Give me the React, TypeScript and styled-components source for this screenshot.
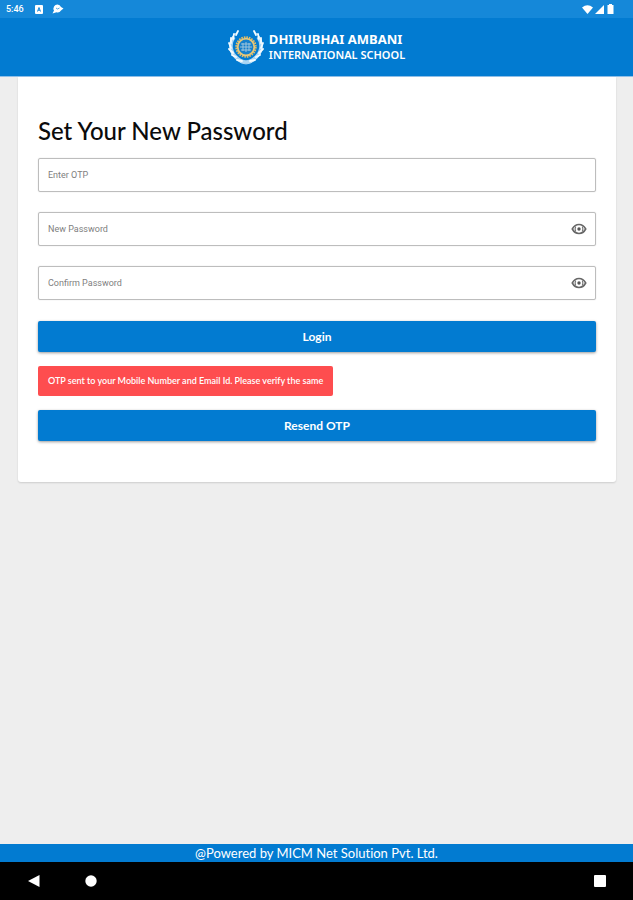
import React from "react";
import styled, { createGlobalStyle } from "styled-components";

const blue = "#027bd1";

const GlobalStyle = createGlobalStyle`
  *, *::before, *::after { box-sizing: border-box; }
  body {
    margin: 0;
    background: #eeeeee;
    color: #0b0b0b;
    font-family: Lato, "Liberation Sans", sans-serif;
    font-variant-ligatures: none;
  }
`;

const Screen = styled.div`
  display: flex;
  flex-direction: column;
  min-height: 100vh;
`;

const StatusBar = styled.div`
  display: flex;
  align-items: center;
  justify-content: space-between;
  height: 18px;
  padding: 0 18px 0 6px;
  background: #1588d9;
  color: #ffffff;
  font: 500 9px/18px Roboto, "Liberation Sans", sans-serif;
`;

const StatusGroup = styled.div<{ $gap: number }>`
  display: flex;
  align-items: center;
  gap: ${({ $gap }) => $gap}px;
`;

const Header = styled.header`
  display: flex;
  align-items: center;
  justify-content: center;
  gap: 5px;
  height: 59px;
  background: ${blue};
  border-bottom: 1px solid #8fbfe8;
  color: #ffffff;
`;

const SchoolName = styled.div`
  display: flex;
  flex-direction: column;
  font-family: "Noto Sans", "Open Sans", sans-serif;
  white-space: nowrap;
`;

const NameLine = styled.span<{ $size: number; $weight: number }>`
  font-size: ${({ $size }) => $size}px;
  font-weight: ${({ $weight }) => $weight};
  line-height: 15px;
`;

const Main = styled.main`
  flex: 1;
  padding: 0 17px 20px 18px;
`;

const Card = styled.form`
  display: flex;
  flex-direction: column;
  padding: 39px 20px 41px;
  background: #ffffff;
  border-radius: 0 0 3px 3px;
  box-shadow: 0 1px 2px rgba(0, 0, 0, 0.14);
`;

const Title = styled.h1`
  margin: 0 0 12px;
  font-size: 24px;
  line-height: 30px;
  font-weight: 500;
`;

const Field = styled.div`
  display: flex;
  align-items: center;
  height: 34px;
  margin-bottom: 20px;
  padding: 0 8px 0 9px;
  border: 1px solid #bdbdbd;
  border-radius: 2px;
  box-shadow: 0 0 1px rgba(0, 0, 0, 0.25);

  &:focus-within { border-color: ${blue}; }
`;

const TextInput = styled.input`
  flex: 1;
  min-width: 0;
  height: 30px;
  padding: 0;
  border: 0;
  outline: 0;
  background: transparent;
  color: #222222;
  font: 400 9px/14px Roboto, "Liberation Sans", sans-serif;

  &::placeholder { color: #808080; opacity: 1; }
`;

const EyeButton = styled.button`
  display: flex;
  padding: 0;
  border: 0;
  background: transparent;
  cursor: pointer;
`;

const ActionButton = styled.button`
  height: 31px;
  padding: 0;
  border: 0;
  border-radius: 2px;
  background: ${blue};
  box-shadow: 0 1px 3px rgba(0, 0, 0, 0.4);
  color: #ffffff;
  font: 700 12px/16px Lato, "Liberation Sans", sans-serif;
  cursor: pointer;
`;

const Notice = styled.p`
  align-self: flex-start;
  margin: 14px 0;
  padding: 8px 10px;
  border-radius: 2px;
  background: #fe4d4f;
  color: #ffffff;
  font-size: 9px;
  line-height: 14px;
  font-weight: 600;
`;

const Actions = styled.div`
  display: flex;
  flex-direction: column;
  padding-top: 1px;
`;

const Footer = styled.footer`
  background: ${blue};
  color: #ffffff;
  font-size: 13px;
  line-height: 18px;
  text-align: center;
`;

const NavBar = styled.nav`
  display: flex;
  align-items: center;
  gap: 45px;
  height: 38px;
  padding: 0 27px 0 28px;
  background: #000000;
`;

const NavButton = styled.button<{ $end?: boolean }>`
  display: flex;
  padding: 0;
  border: 0;
  background: transparent;
  cursor: pointer;
  margin-left: ${({ $end }) => ($end ? "auto" : "0")};
`;

function Crest() {
  return (
    <svg width="36" height="36" viewBox="0 0 36 36" aria-hidden="true">
      <g fill="none" stroke="#e3f4ff">
        <path d="M8 4A17 17 0 0 0 9 31Q13 35 18 35Q23 35 27 31A17 17 0 0 0 28 4" strokeWidth="1" opacity=".6" />
        <path d="M6 8A15 15 0 0 0 9 29Q13 33 18 33Q23 33 27 29A15 15 0 0 0 30 8" strokeWidth="3.5" opacity=".75" />
      </g>
      <g fill="none" stroke="#f4fbff" strokeWidth="1.8" strokeLinecap="round">
        <path d="M10 2 8 6M6 5 5 10M3 9 3 14M1 14 3 19M1 20 5 24M4 26 8 28M9 31 14 32" />
        <path d="M26 2 28 6M30 5 31 10M33 9 33 14M35 14 33 19M35 20 31 24M32 26 28 28M27 31 22 32" />
      </g>
      <circle cx="18" cy="18" r="11.5" fill={blue} />
      <circle cx="18" cy="18" r="9.8" fill="none" stroke="#e5bd63" strokeWidth="1.8" strokeDasharray="1.6 .97" />
      <circle cx="18" cy="18" r="8.3" fill="#1680cc" stroke="#e9c878" strokeWidth="1.8" />
      <path d="M13 15h10M12 18h12M13 21h10M18 13v10M15 14v8M21 14v8" stroke="#a9cbdd" strokeWidth=".9" />
    </svg>
  );
}

function Eye() {
  return (
    <svg width="16" height="12" viewBox="0 0 16 12" aria-hidden="true">
      <path d="M1.3 6Q3.7 1.5 8 1.5T14.7 6Q12.3 10.5 8 10.5T1.3 6Z" fill="none" stroke="#666666" strokeWidth="1.6" />
      <path d="M4.700 3.500Q3.500 6 4.700 8.500M11.300 3.500Q12.500 6 11.300 8.500" fill="none" stroke="#777777" strokeWidth="1.2" />
      <circle cx="8" cy="6" r="1.7" fill="#555555" />
    </svg>
  );
}

function PasswordField({ label }: { label: string }) {
  const [shown, setShown] = React.useState(false);
  return (
    <Field>
      <TextInput type={shown ? "text" : "password"} placeholder={label} aria-label={label} />
      <EyeButton type="button" aria-label={`Show ${label}`} onClick={() => setShown(!shown)}>
        <Eye />
      </EyeButton>
    </Field>
  );
}

export default function App() {
  return (
    <Screen>
      <GlobalStyle />
      <StatusBar>
        <StatusGroup $gap={9}>
          <span>5:46</span>
          <svg width="10" height="9" viewBox="0 0 10 9" aria-hidden="true">
            <rect x="2" width="8" height="9" rx="1" fill="#ffffff" />
            <path d="M4.500 6.500 6 2.500l1.500 4M5 5.200h2" fill="none" stroke="#1588d9" />
          </svg>
          <svg width="12" height="10" viewBox="0 0 12 10" aria-hidden="true">
            <path d="M5.500.5A4 4 0 0 1 9 3l2.500 1.500L9 6.500A4 4 0 0 1 4.500 8.300L.5 9.500 2 6.500A4 4 0 0 1 5.500.5Z" fill="#ffffff" />
            <path d="m4 4 1.500 1L7.500 4" fill="none" stroke="#1588d9" strokeWidth=".7" />
          </svg>
        </StatusGroup>
        <StatusGroup $gap={2}>
          <svg width="11" height="9" viewBox="0 0 11 9" aria-hidden="true">
            <path d="M0 2.500Q5.500-2 11 2.500L5.500 9Z" fill="#ffffff" />
          </svg>
          <svg width="9" height="9" viewBox="0 0 9 9" aria-hidden="true">
            <path d="M9 0v9H0Z" fill="#ffffff" />
          </svg>
          <svg width="9" height="10" viewBox="0 0 9 10" aria-hidden="true">
            <path d="M3 0h3v1h1.500v9h-6V1H3Z" fill="#ffffff" />
          </svg>
        </StatusGroup>
      </StatusBar>
      <Header>
        <Crest />
        <SchoolName>
          <NameLine $size={13} $weight={700}>DHIRUBHAI AMBANI</NameLine>
          <NameLine $size={11} $weight={600}>INTERNATIONAL SCHOOL</NameLine>
        </SchoolName>
      </Header>
      <Main>
        <Card onSubmit={(e) => e.preventDefault()}>
          <Title>Set Your New Password</Title>
          <Field>
            <TextInput type="text" placeholder="Enter OTP" aria-label="Enter OTP" />
          </Field>
          <PasswordField label="New Password" />
          <PasswordField label="Confirm Password" />
          <Actions>
            <ActionButton type="submit">Login</ActionButton>
            <Notice role="status">OTP sent to your Mobile Number and Email Id. Please verify the same</Notice>
            <ActionButton type="button">Resend OTP</ActionButton>
          </Actions>
        </Card>
      </Main>
      <Footer>@Powered by MICM Net Solution Pvt. Ltd.</Footer>
      <NavBar aria-label="System navigation">
        <NavButton aria-label="Back">
          <svg width="12" height="12" viewBox="0 0 12 12" aria-hidden="true">
            <path d="M11.500 0v12L0 6Z" fill="#ffffff" />
          </svg>
        </NavButton>
        <NavButton aria-label="Home">
          <svg width="12" height="12" viewBox="0 0 12 12" aria-hidden="true">
            <circle cx="6" cy="6" r="5.700" fill="#ffffff" />
          </svg>
        </NavButton>
        <NavButton aria-label="Recent apps" $end>
          <svg width="12" height="12" viewBox="0 0 12 12" aria-hidden="true">
            <rect width="12" height="12" rx="1" fill="#ffffff" />
          </svg>
        </NavButton>
      </NavBar>
    </Screen>
  );
}
